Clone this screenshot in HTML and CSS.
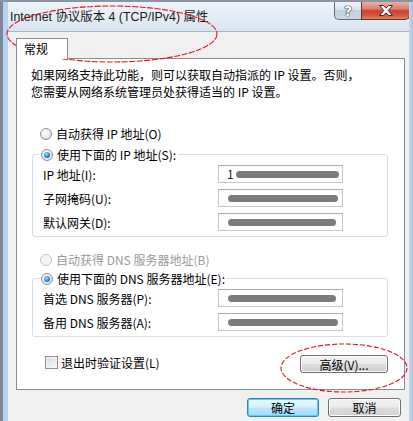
FILE: index.html
```html
<!DOCTYPE html>
<html lang="zh-CN">
<head>
<meta charset="utf-8">
<title>Internet 协议版本 4 (TCP/IPv4) 属性</title>
<link rel="stylesheet" href="styles.css">
</head>
<body>
<div class="screen">
  <div class="topstrip"></div>
  <div class="window">
    <div class="frame-left"></div>
    <div class="main">
      <div class="titlebar">
        <span class="title">Internet 协议版本 4 (TCP/IPv4) 属性</span>
        <div class="caption-btns">
          <div class="cbtn help"><span class="q">?</span></div>
          <div class="cbtn close">
            <svg width="16" height="11" viewBox="0 0 16 11"><path d="M1.5 0.5 H5.5 L8 3.2 L10.5 0.5 H14.5 L10.2 5.5 L14.5 10.5 H10.5 L8 7.8 L5.5 10.5 H1.5 L5.8 5.5 Z" fill="#ffffff" stroke="#4a2a24" stroke-width="1"/></svg>
          </div>
        </div>
      </div>
      <div class="client">
        <div class="tabs"><div class="tab">常规</div></div>
        <div class="page">
          <div class="intro">
            <div>如果网络支持此功能，则可以获取自动指派的 IP 设置。否则，</div>
            <div>您需要从网络系统管理员处获得适当的 IP 设置。</div>
          </div>

          <label class="radio-row first"><span class="radio"></span><span>自动获得 IP 地址(O)</span></label>

          <div class="group g1">
            <label class="radio-row legend"><span class="radio on"></span><span>使用下面的 IP 地址(S):</span></label>
            <div class="field"><span class="lbl">IP 地址(I):</span><span class="input"><span class="ch">1</span><span class="blob w1"></span></span></div>
            <div class="field"><span class="lbl">子网掩码(U):</span><span class="input"><span class="blob w2"></span></span></div>
            <div class="field"><span class="lbl">默认网关(D):</span><span class="input"><span class="blob w3"></span></span></div>
          </div>

          <label class="radio-row disabled"><span class="radio dis"></span><span>自动获得 DNS 服务器地址(B)</span></label>

          <div class="group g2">
            <label class="radio-row legend"><span class="radio on"></span><span>使用下面的 DNS 服务器地址(E):</span></label>
            <div class="field"><span class="lbl">首选 DNS 服务器(P):</span><span class="input"><span class="blob w3"></span></span></div>
            <div class="field"><span class="lbl">备用 DNS 服务器(A):</span><span class="input"><span class="blob w2"></span></span></div>
          </div>

          <div class="bottom-row">
            <label class="check-row"><span class="checkbox"></span><span>退出时验证设置(L)</span></label>
            <button class="btn adv">高级(V)...</button>
          </div>
        </div>
        <div class="footer">
          <button class="btn default">确定</button>
          <button class="btn">取消</button>
        </div>
      </div>
    </div>
    <div class="frame-right"></div>
  </div>
  <svg class="annot" width="413" height="421" viewBox="0 0 413 421">
    <ellipse cx="112" cy="34" rx="105" ry="28" fill="none" stroke="#e8141c" stroke-width="1.1" stroke-dasharray="6 1.5"/>
    <ellipse cx="344" cy="368" rx="63" ry="24" fill="none" stroke="#e8141c" stroke-width="1.1" stroke-dasharray="5 2"/>
  </svg>
</div>
</body>
</html>
```

FILE: styles.css
```css
* { box-sizing: border-box; }
html, body { margin: 0; padding: 0; }
body {
  width: 413px;
  height: 421px;
  overflow: hidden;
  background: #6f7683;
  font-family: "Noto Sans CJK SC", "Liberation Sans", sans-serif;
  font-size: 12px;
  color: #000;
}
.screen {
  position: relative;
  width: 413px;
  height: 421px;
  display: flex;
  flex-direction: column;
}
.topstrip {
  height: 2px;
  background: #8a94a3;
}
.window {
  flex: 1;
  display: flex;
  min-height: 0;
}
.frame-left {
  width: 8px;
  background: linear-gradient(90deg, #7d8796 0 3px, #b9d3ee 3px 8px);
}
.frame-right {
  width: 4px;
  background: linear-gradient(90deg, #c4d9ef, #a9c7e8);
}
.main {
  flex: 1;
  display: flex;
  flex-direction: column;
  min-width: 0;
}
.titlebar {
  height: 29px;
  display: flex;
  align-items: flex-start;
  justify-content: space-between;
  background: linear-gradient(180deg, #edf3f9 0%, #e3ebf5 60%, #d9e4f0 100%);
}
.title {
  font-family: "Liberation Sans", "Noto Sans CJK SC", sans-serif;
  font-size: 12.4px;
  line-height: 16px;
  margin-top: 7px;
  margin-left: 2px;
  color: #1b1b1b;
}
.caption-btns {
  display: flex;
  margin-right: -1px;
}
.cbtn {
  height: 18px;
  display: flex;
  align-items: center;
  justify-content: center;
  border: 1px solid #5d6b7f;
  border-top: none;
}
.help {
  width: 27px;
  border-bottom-left-radius: 5px;
  border-right: none;
  background: linear-gradient(180deg, #eef3f8 0%, #dbe4ee 45%, #c3d0de 50%, #cbd8e6 100%);
}
.q {
  font-family: "DejaVu Sans", sans-serif;
  font-weight: bold;
  font-size: 14px;
  line-height: 14px;
  color: #ffffff;
  text-shadow: 0 0 1px #2a3646, 0 0 1px #2a3646, 0 0 1px #2a3646;
}
.close {
  width: 49px;
  border-bottom-right-radius: 5px;
  border-color: #6b2a22;
  background: linear-gradient(180deg, #eab0a6 0%, #dd7f70 40%, #c9412c 52%, #d15a3f 80%, #e3886a 100%);
}
.client {
  flex: 1;
  background: #f0f0f0;
  border-top: 1px solid #a9b6c6;
  padding: 6px 4px 0 8px;
}
.tabs {
  display: flex;
  height: 20px;
  position: relative;
  z-index: 1;
}
.tab {
  width: 52px;
  height: 21px;
  background: #ffffff;
  border: 1px solid #898c95;
  border-bottom: none;
  padding-left: 7px;
  line-height: 19px;
  font-size: 12px;
}
.page {
  height: 332px;
  background: #ffffff;
  border: 1px solid #898c95;
  padding: 7px 0 0 14px;
}
.intro {
  line-height: 17px;
  white-space: nowrap;
}
.radio-row {
  display: flex;
  align-items: center;
  height: 16px;
  line-height: 16px;
  white-space: nowrap;
}
.radio-row.first { margin-top: 26px; margin-left: 9px; }
.radio {
  width: 12px;
  height: 12px;
  border-radius: 50%;
  border: 1px solid #8a8f96;
  background: radial-gradient(circle at 40% 35%, #ffffff 0%, #e8e9eb 55%, #cfd2d6 100%);
  margin-right: 4px;
  flex: none;
  position: relative;
}
.radio.on::after {
  content: "";
  position: absolute;
  left: 2px;
  top: 2px;
  width: 6px;
  height: 6px;
  border-radius: 50%;
  background: radial-gradient(circle at 40% 35%, #9fe2ff 0%, #1f86d6 55%, #0b4f9c 100%);
}
.radio.dis {
  border-color: #c4c6c9;
  background: #f4f4f4;
}
.radio-row.disabled { color: #9a9a9a; margin-top: 15px; margin-left: 9px; }
.group {
  width: 356px;
  margin-left: 1px;
  border: 1px solid #d5dfe5;
  border-radius: 3px;
  padding: 0 0 5px 10px;
}
.g1 { margin-top: 12px; }
.g2 { margin-top: 10px; }
.radio-row.legend {
  width: fit-content;
  margin-top: -8px;
  margin-left: -4px;
  padding: 0 2px;
  background: #ffffff;
}
.field {
  display: flex;
  align-items: center;
  height: 18px;
  margin-top: 6px;
  white-space: nowrap;
}
.legend + .field { margin-top: 2px; }
.lbl {
  width: 175px;
  flex: none;
}
.input {
  width: 125px;
  height: 18px;
  border: 1px solid #c3c7cd;
  border-top-color: #abadb3;
  background: #ffffff;
  display: flex;
  align-items: center;
  padding-left: 8px;
  font-size: 12px;
  color: #222;
}
.ch { margin-right: 2px; line-height: 14px; }
.blob {
  height: 7px;
  border-radius: 4px;
  background: #7b7b7b;
  filter: blur(0.7px);
}
.w1 { width: 103px; }
.w2 { width: 110px; margin-left: 1px; }
.w3 { width: 108px; margin-left: 1px; }
.bottom-row {
  width: 356px;
  margin-left: 1px;
  margin-top: 18px;
  display: flex;
  justify-content: space-between;
  align-items: flex-start;
}
.check-row {
  display: flex;
  align-items: center;
  height: 14px;
  margin-left: 13px;
  white-space: nowrap;
}
.checkbox {
  width: 13px;
  height: 13px;
  border: 1px solid #8f8f8f;
  background: linear-gradient(135deg, #dcdcdc, #f6f6f6);
  box-shadow: inset 0 0 0 1px #f4f4f4;
  margin-right: 3px;
}
.btn {
  font-family: "Noto Sans CJK SC", "Liberation Sans", sans-serif;
  font-size: 12px;
  line-height: 15px;
  height: 19px;
  padding: 0;
  border: 1px solid #707070;
  border-radius: 3px;
  color: #000;
  background: linear-gradient(180deg, #f2f2f2 0%, #ebebeb 48%, #dddddd 52%, #cfcfcf 100%);
  box-shadow: inset 0 0 0 1px #fcfcfc;
}
.adv { width: 88px; height: 18px; }
.footer {
  display: flex;
  justify-content: flex-end;
  gap: 9px;
  margin-top: 8px;
  padding-right: 4px;
}
.footer .btn { width: 73px; }
.footer .btn.default { width: 72px; }
.btn.default {
  border-color: #3c7fb1;
  background: linear-gradient(180deg, #eaf6fd 0%, #d9f0fc 48%, #bee6fd 52%, #a7d9f5 100%);
  box-shadow: inset 0 0 0 1px #48d2f8;
}
.annot {
  position: absolute;
  left: 0;
  top: 0;
  pointer-events: none;
}
```
